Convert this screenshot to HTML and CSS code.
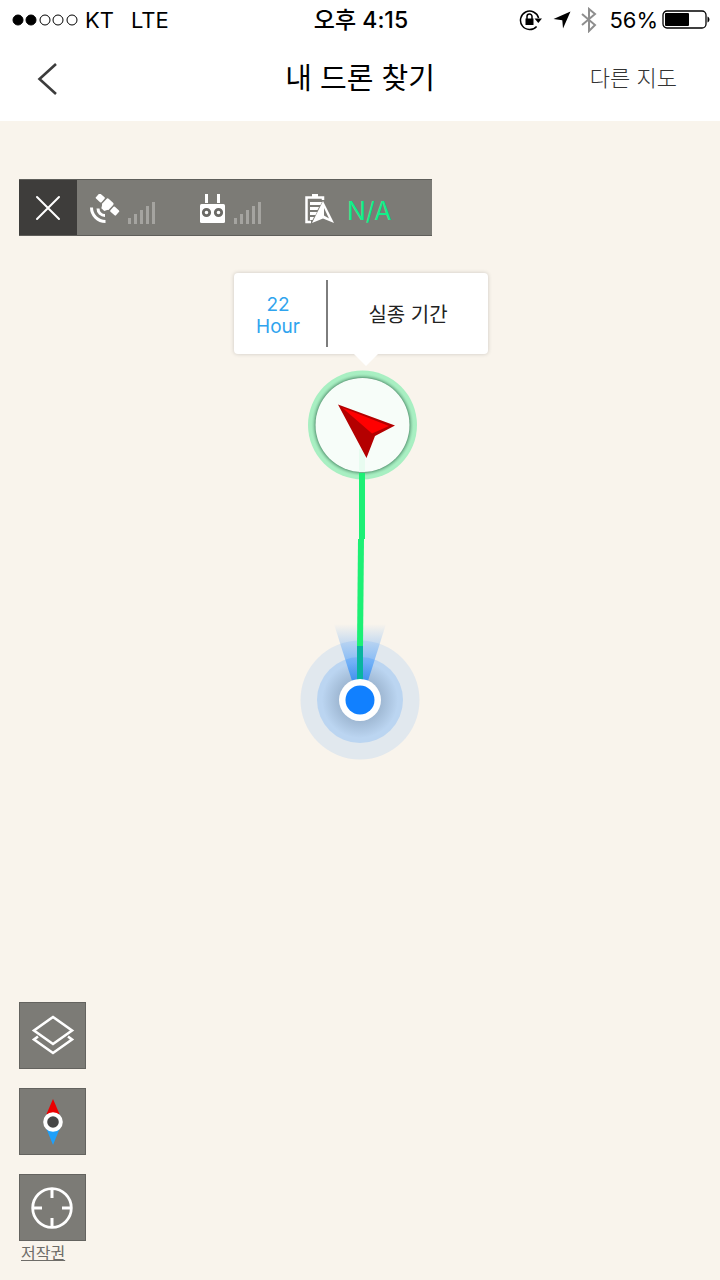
FILE: index.html
```html
<!DOCTYPE html>
<html lang="ko">
<head>
    <title>내 드론 찾기</title>
    <meta charset="UTF-8">
    <meta name="viewport" content="width=device-width">
    <link rel="stylesheet" href="styles.css">
</head>
<body>

<header>
    <div class="status">
        <div class="status-left">
            <svg width="66" height="12" viewBox="0 0 66 12" fill="none" stroke="#000">
                <circle cx="6" cy="6" r="5" fill="#000"/>
                <circle cx="19" cy="6" r="5" fill="#000"/>
                <circle cx="33" cy="6" r="5"/>
                <circle cx="46" cy="6" r="5"/>
                <circle cx="60" cy="6" r="5"/>
            </svg>
            <span>KT</span>
            <span class="network">LTE</span>
        </div>
        <div class="clock">오후 4:15</div>
        <div class="status-right">
            <svg width="24" height="22" viewBox="0 0 24 22">
                <path d="M17.600 17.400A9.200 9.200 0 1 1 19.600 9" fill="none" stroke="#000" stroke-width="1.500"/>
                <path d="M15.500 9.500h7.500l-3.700 4.500z"/>
                <path d="M6.500 9.500h8v6.500h-8z"/>
                <path d="M8 10V7.500a2.500 2.500 0 0 1 5 0V10" fill="none" stroke="#000" stroke-width="1.500"/>
            </svg>
            <svg class="arrow" width="18" height="18" viewBox="0 0 18 18">
                <path d="M17.500 0.500L10 17.500L9.300 9.300L0.500 8z"/>
            </svg>
            <svg class="bluetooth" width="16" height="26" viewBox="0 0 16 26" fill="none" stroke="#8e8e8e" stroke-width="2">
                <path d="M1 7l13 11-6 6V2l6 5L1 18"/>
            </svg>
            <span>56%</span>
            <svg class="battery" width="48" height="20" viewBox="0 0 48 20">
                <rect x="1" y="1" width="43" height="17" rx="4" fill="none" stroke="#000" stroke-width="1.300"/>
                <rect x="3" y="3" width="24" height="13" rx="1"/>
                <path d="M45.500 6.500c2.600 1 2.600 5 0 6z"/>
            </svg>
        </div>
    </div>
    <div class="navbar">
        <button class="back" aria-label="뒤로">
            <svg width="20" height="34" viewBox="0 0 20 34" fill="none" stroke="#3c3c3c" stroke-width="2.600">
                <path d="M19 2L2.500 17L19 32"/>
            </svg>
        </button>
        <h1>내 드론 찾기</h1>
        <button class="other-map">다른 지도</button>
    </div>
</header>

<main class="map">
    <div class="telemetry">
        <button class="close" aria-label="닫기">
            <svg width="26" height="26" viewBox="0 0 26 26" fill="none" stroke="#fff" stroke-width="2" stroke-linecap="round">
                <path d="M2 2L24 24M24 2L2 24"/>
            </svg>
        </button>
        <div class="readings">
            <div class="reading">
                <svg width="30" height="30" viewBox="0 0 30 30">
                    <g transform="translate(17.500 10.500) rotate(42)" fill="#fff">
                        <rect x="-4.500" y="-5" width="9" height="9" rx="1.500"/>
                        <rect x="-13.500" y="-3.300" width="7.500" height="6.600" rx="1"/>
                        <rect x="6" y="-3.300" width="7.500" height="6.600" rx="1"/>
                        <path d="M-4.500 2.500h9l-2.500 4.500h-4z"/>
                    </g>
                    <path d="M8 14.500a7 7 0 0 0 7 7M1.500 13.500a14 14 0 0 0 14 14" fill="none" stroke="#fff" stroke-width="3"/>
                </svg>
                <svg width="27" height="22" viewBox="0 0 27 22" fill="#a5a4a0">
                    <path d="M0 16h3v6h-3zM6 12h3v10h-3zM12 8h3v14h-3zM18 4h3v18h-3zM24 0h3v22h-3z"/>
                </svg>
            </div>
            <div class="reading">
                <svg width="27" height="30" viewBox="0 0 27 30" fill="#fff">
                    <rect x="6" y="0" width="3" height="9"/>
                    <rect x="18" y="0" width="3" height="9"/>
                    <rect x="1" y="10" width="25" height="19" rx="1.500"/>
                    <g stroke="#6b6a66" stroke-width="2.800">
                        <circle cx="7.500" cy="18.500" r="3.200"/>
                        <circle cx="19.500" cy="18.500" r="3.200"/>
                    </g>
                </svg>
                <svg width="27" height="22" viewBox="0 0 27 22" fill="#a5a4a0">
                    <path d="M0 16h3v6h-3zM6 12h3v10h-3zM12 8h3v14h-3zM18 4h3v18h-3zM24 0h3v22h-3z"/>
                </svg>
            </div>
            <div class="reading">
                <svg width="29" height="30" viewBox="0 0 29 30">
                    <path d="M6 28H1.500V3.500H18V6" fill="none" stroke="#fff" stroke-width="2.500"/>
                    <path d="M7 0h6v3h-6zM5 8h12l-1.500 3H5zM5 13h9l-1.500 3H5zM5 18h7l-1.500 3H5zM5 23h4l-1.500 3H5z" fill="#fff"/>
                    <path d="M18 7L29 29L18 24.500L7 29z" fill="#fff"/>
                    <path d="M19 14l5 10.500-5-3z" fill="#7c7b76"/>
                </svg>
                <span class="value">N/A</span>
            </div>
        </div>
    </div>

    <div class="flight">
        <div class="callout">
            <div class="elapsed">22<br>Hour</div>
            <div class="caption">실종 기간</div>
        </div>
        <svg class="route" width="120" height="393" viewBox="0 0 120 393">
            <defs>
                <linearGradient id="beam" x1="0" y1="0" x2="0" y2="1">
                    <stop offset="0" stop-color="#1180ff" stop-opacity="0"/>
                    <stop offset="1" stop-color="#1180ff" stop-opacity="0.65"/>
                </linearGradient>
                <radialGradient id="halo">
                    <stop offset="0.45" stop-color="#4a6078" stop-opacity="0.3"/>
                    <stop offset="1" stop-color="#4a6078" stop-opacity="0"/>
                </radialGradient>
                <radialGradient id="rim">
                    <stop offset="0.86" stop-color="#5c9c78"/>
                    <stop offset="0.95" stop-color="#a8efc2" stop-opacity="0"/>
                </radialGradient>
            </defs>
            <circle cx="60" cy="331" r="59.500" fill="#1180ff" fill-opacity="0.1"/>
            <circle cx="60" cy="331" r="43" fill="#1180ff" fill-opacity="0.18"/>
            <circle cx="60" cy="331" r="38" fill="url(#halo)"/>
            <path d="M34 255H86L68 312H52z" fill="url(#beam)"/>
            <path d="M61 170L60 278" fill="none" stroke="#1df075" stroke-width="6"/>
            <path d="M57 277h6v35h-6z" fill="#08b4a0"/>
            <circle cx="60" cy="331" r="21" fill="#fff"/>
            <circle cx="60" cy="331" r="14.500" fill="#1180ff"/>

            <circle cx="62.500" cy="56" r="54.500" fill="#a8efc2"/>
            <circle cx="62.500" cy="56" r="54.500" fill="url(#rim)"/>
            <circle cx="62.500" cy="56" r="47" fill="#f7fdf9"/>
            <path d="M59 80h6v23h-6z" fill="#e8fcf0"/>
            <path d="M62 104V170" fill="none" stroke="#1df075" stroke-width="6"/>
            <path d="M38 35.500L95 56.500L75 67L66.500 89z" fill="#b40000"/>
            <path d="M42 38.500L89 57L72 64.500z" fill="#ff0000"/>
        </svg>
    </div>

    <div class="tools">
        <button class="tool" aria-label="지도 유형">
            <svg width="44" height="42" viewBox="0 0 44 42" fill="none" stroke="#fff" stroke-width="2.600">
                <path d="M22 2L41 15.500L22 29L3 15.500z"/>
                <path d="M7 21.500L3 24.500L22 38L41 24.500L37 21.500"/>
            </svg>
        </button>
        <button class="tool" aria-label="나침반">
            <svg width="20" height="46" viewBox="0 0 20 46">
                <path d="M10 0L16.500 15H3.500z" fill="#eb0000"/>
                <path d="M10 46L16.500 30H3.500z" fill="#1ea0fa"/>
                <circle cx="10" cy="23" r="7.800" fill="#464646" stroke="#fff" stroke-width="4"/>
            </svg>
        </button>
        <button class="tool" aria-label="내 위치">
            <svg width="44" height="42" viewBox="0 0 44 42" fill="none" stroke="#fff" stroke-width="3">
                <circle cx="21" cy="21" r="19.300" stroke-width="2.800"/>
                <path d="M21 2V11M21 31V40M2 21H11M31 21H40"/>
            </svg>
        </button>
    </div>
    <a class="copyright" href="#">저작권</a>
</main>

</body>
</html>
```

FILE: styles.css
```css
*{
    box-sizing: border-box;
}

body{
    display: flex;
    flex-direction: column;
    min-height: 100vh;
    margin: 0;
    font-family: Inter, "Noto Sans CJK KR", sans-serif;
    color: #000;
}

button{
    border: 0;
    padding: 0;
    background: none;
    font: inherit;
    cursor: pointer;
}

svg{
    display: block;
    flex: none;
}

header{
    background-color: #fff;
}

.status{
    display: grid;
    grid-template-columns: 1fr auto 1fr;
    align-items: center;
    height: 40px;
    padding: 0 10px 0 12px;
    font-size: 22px;
    line-height: 40px;
}

.status-left,
.status-right{
    display: flex;
    align-items: center;
}

.status-left{
    gap: 7px;
}

.status-right{
    justify-content: flex-end;
}

.network{
    margin-left: 10px;
}

.clock{
    font-size: 23px;
    font-weight: 500;
}

.arrow{
    margin-left: 10px;
}

.bluetooth{
    margin: 0 12px 0 10px;
}

.battery{
    margin-left: 4px;
}

.navbar{
    display: grid;
    grid-template-columns: 1fr auto 1fr;
    align-items: center;
    height: 81px;
    padding: 0 37px 4px;
}

.back{
    justify-self: start;
}

h1,
.other-map{
    padding-bottom: 5px;
}

h1{
    margin: 0;
    font-size: 29px;
    font-weight: 400;
}

.other-map{
    justify-self: end;
    padding-right: 6px;
    font-size: 22px;
    font-weight: 300;
    color: #333;
}

.map{
    display: flex;
    flex: 1;
    flex-direction: column;
    align-items: flex-start;
    position: relative;
    padding: 58px 19px 15px;
    background-color: #f9f4ec;
}

.telemetry{
    display: flex;
    height: 57px;
    background-color: #7c7b76;
    border-top: 1px solid #5f5e5a;
    border-bottom: 1px solid #5f5e5a;
}

.close{
    display: flex;
    align-items: center;
    justify-content: center;
    width: 58px;
    background-color: #3e3d3b;
}

.readings{
    display: flex;
    align-items: center;
    gap: 44px;
    padding: 2px 41px 0 13px;
}

.reading{
    display: flex;
    align-items: flex-end;
    gap: 8px;
}

.value{
    margin-left: 5px;
    font-size: 25px;
    line-height: 26px;
    color: #12f08a;
}

/* marker layer, centred on the map */
.flight{
    display: flex;
    flex-direction: column;
    align-items: center;
    position: absolute;
    top: 152px;
    left: 0;
    right: 0;
}

.callout{
    display: flex;
    align-items: center;
    position: relative;
    width: 254px;
    height: 81px;
    margin: 0 0 15px 2px;
    padding: 7px 0;
    border-radius: 4px;
    background-color: #fff;
    box-shadow: 0 0 4px rgba(0, 0, 0, 0.18);
}

.callout::after{
    content: "";
    position: absolute;
    top: 100%;
    left: 120px;
    border: 12px solid transparent;
    border-top-color: #fff;
    border-bottom: 0;
}

.elapsed{
    height: 67px;
    width: 94px;
    padding: 14px 4px 0 0;
    border-right: 2px solid #7d7d7d;
    font-size: 19px;
    line-height: 22px;
    text-align: center;
    color: #2fa4ee;
}

.caption{
    flex: 1;
    font-size: 20px;
    text-align: center;
    color: #222;
}

.tools{
    display: flex;
    flex-direction: column;
    gap: 19px;
    margin-top: auto;
}

.tool{
    display: flex;
    align-items: center;
    justify-content: center;
    width: 67px;
    height: 67px;
    border: 1px solid #64635f;
    background-color: #7c7b76;
}

.copyright{
    margin-left: 2px;
    font-size: 16px;
    line-height: 24px;
    color: #6e6c68;
}
```
